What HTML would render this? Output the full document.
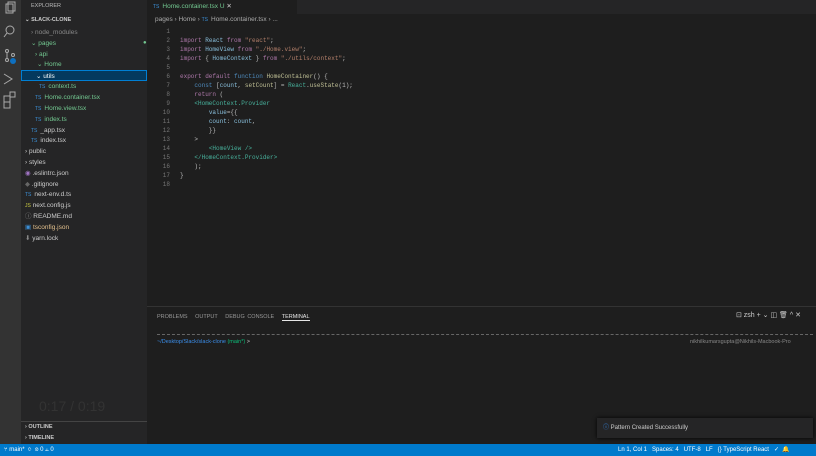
<!DOCTYPE html><html><head><style>
*{margin:0;padding:0;box-sizing:border-box}
body{width:816px;height:456px;background:#1e1e1e;font-family:"Liberation Sans",sans-serif;overflow:hidden;position:relative;color:#ccc}
.a{position:absolute}
#act{left:0;top:0;width:21px;height:444px;background:#333}
#side{left:21px;top:0;width:126px;height:444px;background:#252526}
.r{position:absolute;left:0;width:126px;height:11px;font-size:6.5px;line-height:11px;white-space:nowrap}
.g{color:#73c991}.u{position:absolute;right:10px;font-size:6px}
.ts{color:#3b8fd6;font-size:5px;margin-right:3px}
.code{position:absolute;font-family:"Liberation Mono",monospace;font-size:6px;white-space:pre;line-height:9px;opacity:.85}
.k{color:#c586c0}.b{color:#569cd6}.v{color:#9cdcfe}.s{color:#ce9178}.f{color:#dcdcaa}.t{color:#4ec9b0}
#status{left:0;top:444px;width:816px;height:12px;background:#007acc;color:#fff;font-size:6px;line-height:12px}
</style></head><body>
<div id="act" class="a">
<svg width="21" height="160" style="position:absolute;top:0;left:0" fill="none" stroke="#aaa" stroke-width="1">
<rect x="6" y="4" width="7" height="9"/><rect x="8" y="2" width="7" height="9"/>
<circle cx="10" cy="30" r="4"/><line x1="7" y1="33" x2="4" y2="37"/>
<circle cx="7" cy="51" r="1.5"/><circle cx="7" cy="60" r="1.5"/><circle cx="13" cy="55" r="1.5"/><line x1="7" y1="52" x2="7" y2="59"/>
<path d="M4 74 l8 5 -8 5"/><rect x="4" y="96" width="6" height="6"/><rect x="10" y="92" width="5" height="5"/><rect x="4" y="102" width="6" height="6"/>
<circle cx="9" cy="408" r="4"/><circle cx="9" cy="432" r="4"/>
</svg>
<div class="a" style="left:10px;top:58px;width:6px;height:6px;border-radius:3px;background:#0e70c0"></div>
</div>
<div id="side" class="a">
<div class="r" style="top:1px;left:10px;font-size:5.5px;color:#bbb">EXPLORER</div>
<div class="r" style="top:15px;left:4px;font-size:5.5px;font-weight:bold;color:#ccc">⌄ SLACK-CLONE</div>
<div class="r" style="top:27px;left:10px;color:#888">› node_modules</div>
<div class="r g" style="top:38px;left:10px">⌄ pages<span class="u" style="left:112px">●</span></div>
<div class="r g" style="top:49px;left:14px">› api</div>
<div class="r g" style="top:59px;left:16px">⌄ Home</div>
<div class="r" style="top:70px;left:0;background:#04395e;border:1px solid #007fd4;color:#fff;padding-left:14px">⌄ utils</div>
<div class="r g" style="top:81px;left:18px"><span class="ts">TS</span>context.ts</div>
<div class="r g" style="top:92px;left:14px"><span class="ts">TS</span>Home.container.tsx</div>
<div class="r g" style="top:103px;left:14px"><span class="ts">TS</span>Home.view.tsx</div>
<div class="r g" style="top:114px;left:14px"><span class="ts">TS</span>index.ts</div>
<div class="r" style="top:125px;left:10px"><span class="ts">TS</span>_app.tsx</div>
<div class="r" style="top:135px;left:10px"><span class="ts">TS</span>index.tsx</div>
<div class="r" style="top:146px;left:4px">› public</div>
<div class="r" style="top:157px;left:4px">› styles</div>
<div class="r" style="top:168px;left:4px"><span style="color:#a074c4">◉</span> .eslintrc.json</div>
<div class="r" style="top:179px;left:4px"><span style="color:#666">◆</span> .gitignore</div>
<div class="r" style="top:189px;left:4px"><span class="ts">TS</span>next-env.d.ts</div>
<div class="r" style="top:200px;left:4px"><span style="color:#cbcb41;font-size:5px">JS</span> next.config.js</div>
<div class="r" style="top:211px;left:4px"><span style="color:#888">ⓘ</span> README.md</div>
<div class="r" style="top:222px;left:4px;color:#e2c08d"><span style="color:#3b8fd6">▣</span> tsconfig.json</div>
<div class="r" style="top:233px;left:4px"><span style="color:#888">⬇</span> yarn.lock</div>
<div class="a" style="left:0;top:421px;width:126px;height:1px;background:#444"></div>
<div class="r" style="top:422px;left:4px;font-size:5.5px;font-weight:bold">› OUTLINE</div>
<div class="r" style="top:433px;left:4px;font-size:5.5px;font-weight:bold">› TIMELINE</div>
<div class="a" style="left:18px;top:398px;font-size:14px;color:#333">0:17 / 0:19</div>
</div>
<div class="a" style="left:147px;top:0;width:669px;height:14px;background:#252526"></div>
<div class="a" style="left:147px;top:0;width:150px;height:14px;background:#1e1e1e;font-size:6.5px;line-height:14px;padding-left:6px;color:#73c991"><span class="ts">TS</span>Home.container.tsx U <span style="color:#ccc">✕</span></div>
<div class="a" style="left:155px;top:16px;font-size:6.5px;color:#aaa">pages › Home › <span class="ts">TS</span>Home.container.tsx › ...</div>
<div class="code" style="left:156px;top:27px;color:#858585;text-align:right;width:14px">1
2
3
4
5
6
7
8
9
10
11
12
13
14
15
16
17
18</div>
<div class="code" style="left:180px;top:27px;color:#d4d4d4">
<span class="k">import</span> <span class="v">React</span> <span class="k">from</span> <span class="s">"react"</span>;
<span class="k">import</span> <span class="v">HomeView</span> <span class="k">from</span> <span class="s">"./Home.view"</span>;
<span class="k">import</span> { <span class="v">HomeContext</span> } <span class="k">from</span> <span class="s">"./utils/context"</span>;

<span class="k">export default</span> <span class="b">function</span> <span class="f">HomeContainer</span>() {
    <span class="b">const</span> [<span class="v">count</span>, <span class="f">setCount</span>] = <span class="t">React</span>.<span class="f">useState</span>(1);
    <span class="k">return</span> (
    <span class="t">&lt;HomeContext.Provider</span>
        <span class="v">value</span>={{
        <span class="v">count</span>: <span class="v">count</span>,
        }}
    &gt;
        <span class="t">&lt;HomeView /&gt;</span>
    <span class="t">&lt;/HomeContext.Provider&gt;</span>
    );
}
</div>
<div class="a" style="left:147px;top:306px;width:669px;height:1px;background:#333"></div>
<div class="a" style="left:157px;top:314px;font-size:5.5px;color:#999;word-spacing:1px">PROBLEMS &nbsp; OUTPUT &nbsp; DEBUG CONSOLE &nbsp; <span style="color:#e7e7e7;border-bottom:1px solid #e7e7e7">TERMINAL</span></div>
<div class="a" style="left:736px;top:311px;font-size:7px;color:#ccc">⊡ zsh + ⌄ ◫ 🗑 ^ ✕</div>
<div class="a" style="left:157px;top:334px;width:656px;border-top:1px dashed #666"></div>
<div class="a" style="left:157px;top:339px;font-size:5.5px;color:#3b8eea">~/Desktop/Slack/slack-clone <span style="color:#0dbc79">(main*)</span> <span style="color:#ccc">&gt;</span></div>
<div class="a" style="left:690px;top:339px;font-size:5.5px;color:#888">nikhilkumarsgupta@Nikhils-Macbook-Pro</div>
<div class="a" style="left:597px;top:418px;width:216px;height:20px;background:#252526;box-shadow:0 0 4px #000;font-size:6px;line-height:20px;padding-left:6px;color:#ccc"><span style="color:#3794ff">ⓘ</span> Pattern Created Successfully</div>
<div id="status" class="a"><span style="margin-left:4px">⑂ main* &nbsp;⟳ &nbsp;⊗ 0 ⚠ 0</span><span style="position:absolute;left:618px">Ln 1, Col 1 &nbsp; Spaces: 4 &nbsp; UTF-8 &nbsp; LF &nbsp; {} TypeScript React &nbsp; ✓ &nbsp;🔔</span></div>
</body></html>
